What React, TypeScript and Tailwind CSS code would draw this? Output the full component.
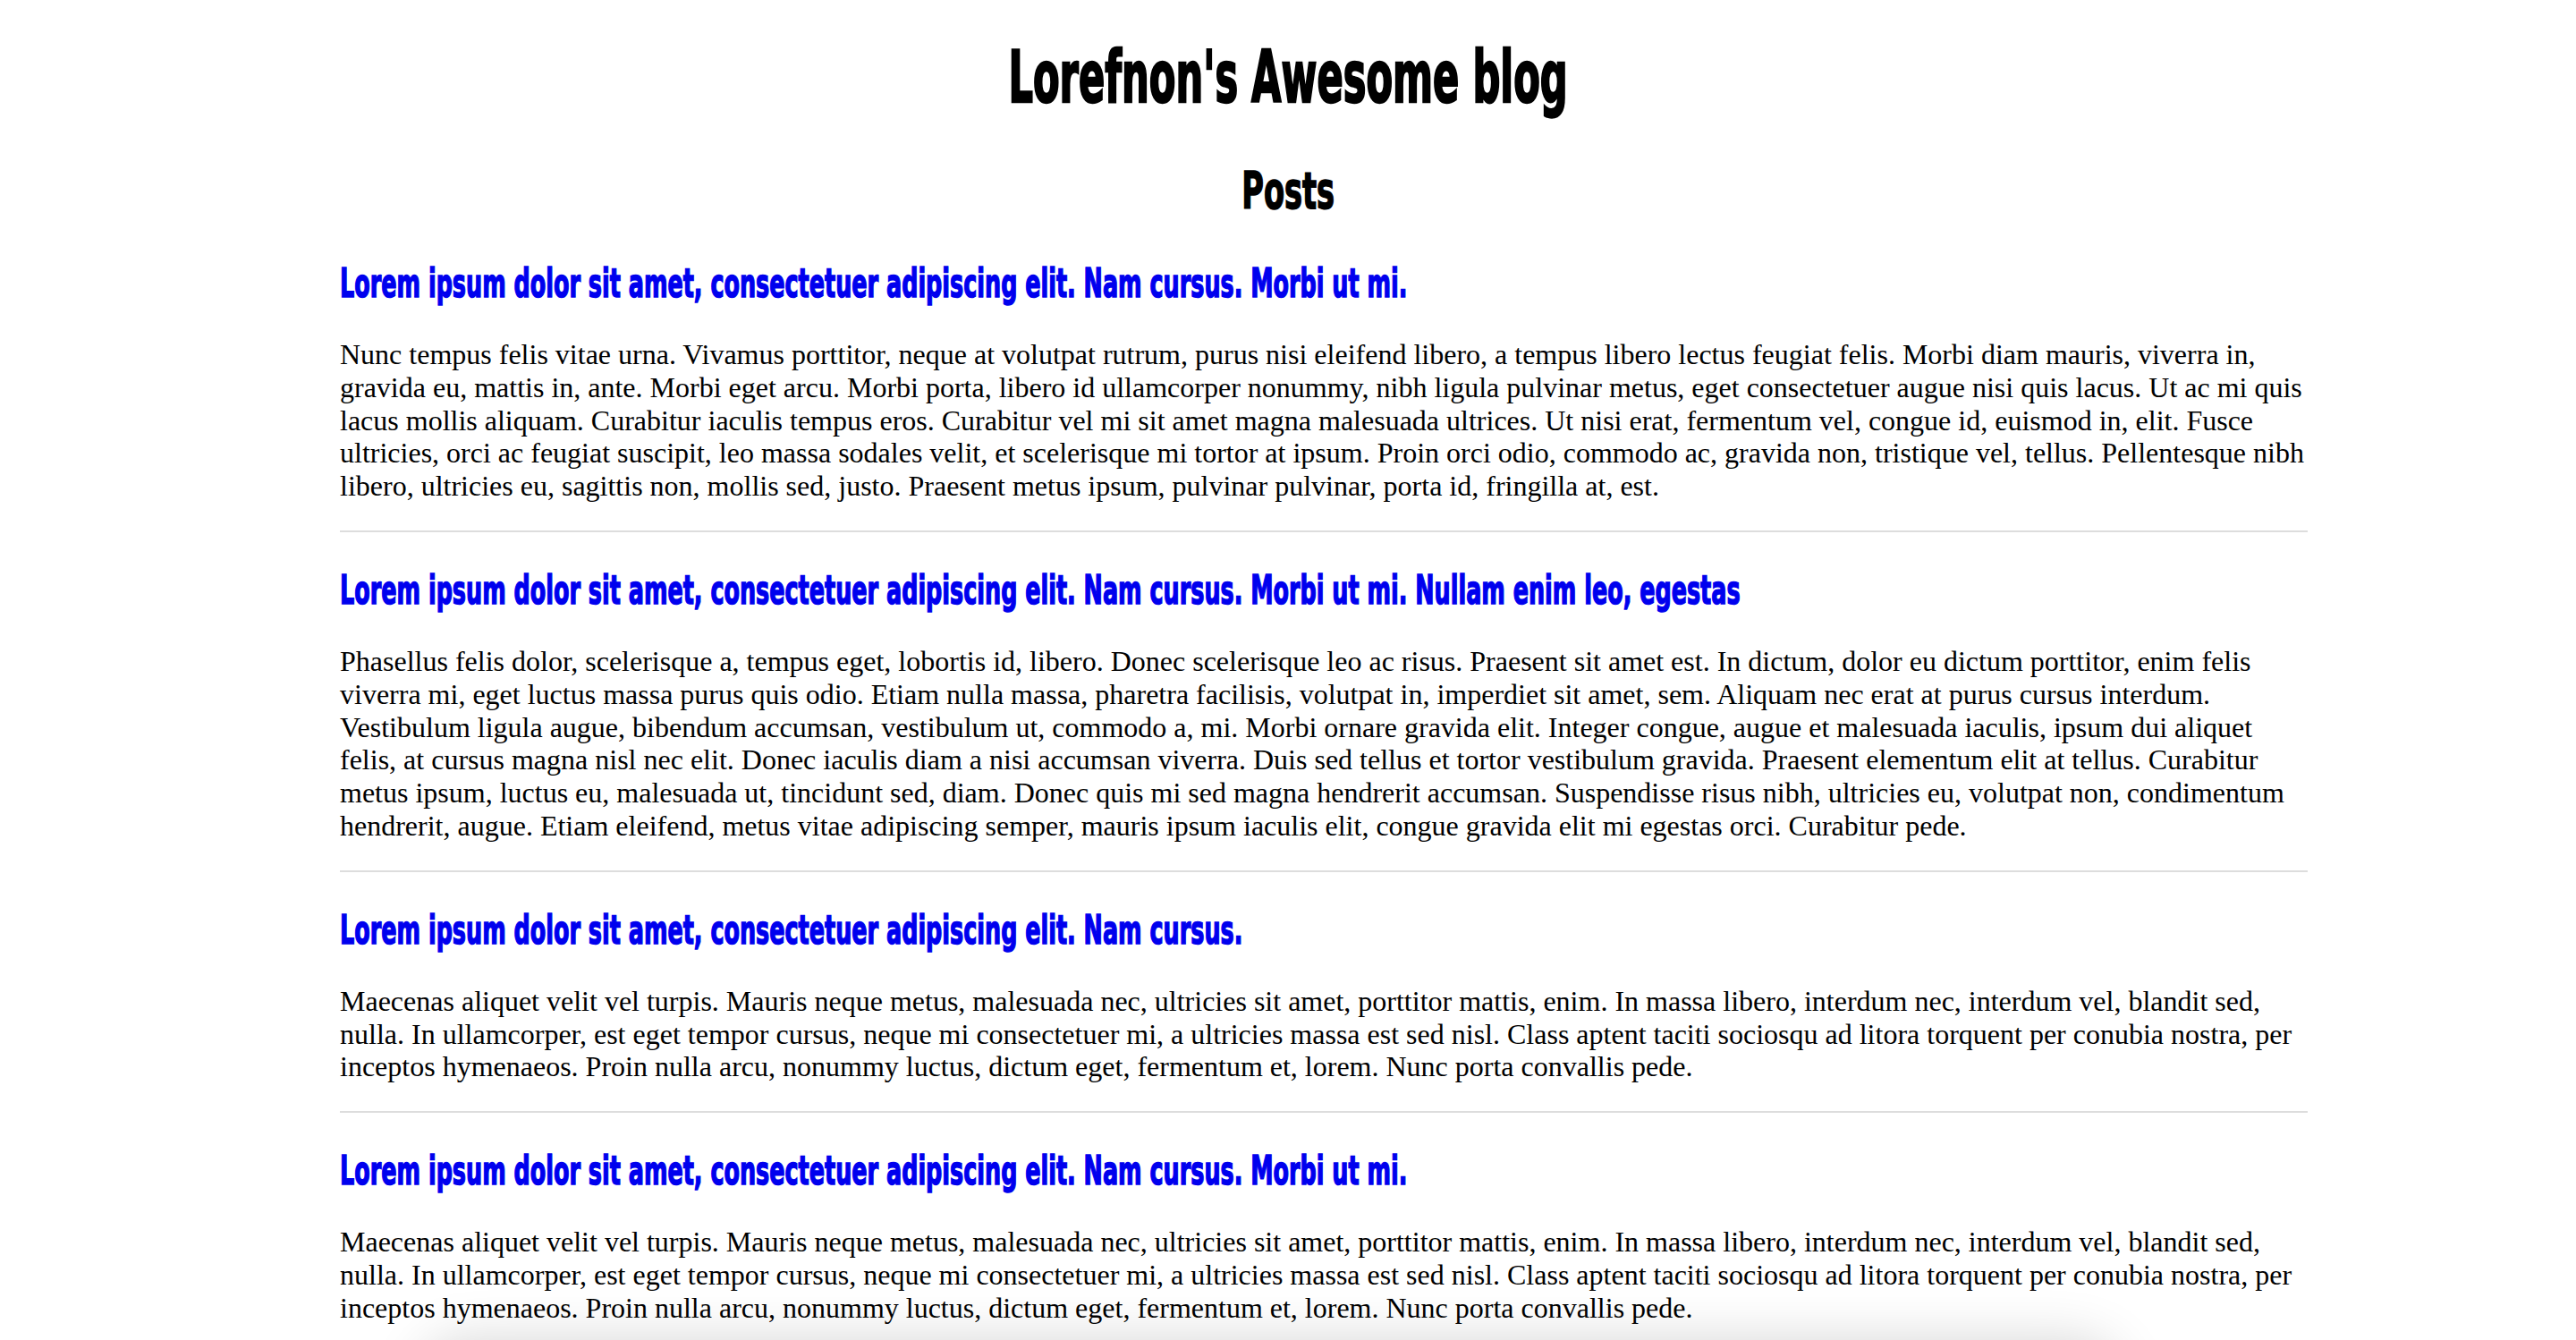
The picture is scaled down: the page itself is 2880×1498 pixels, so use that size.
const posts = [
  {
    title: "Lorem ipsum dolor sit amet, consectetuer adipiscing elit. Nam cursus. Morbi ut mi.",
    body: "Nunc tempus felis vitae urna. Vivamus porttitor, neque at volutpat rutrum, purus nisi eleifend libero, a tempus libero lectus feugiat felis. Morbi diam mauris, viverra in, gravida eu, mattis in, ante. Morbi eget arcu. Morbi porta, libero id ullamcorper nonummy, nibh ligula pulvinar metus, eget consectetuer augue nisi quis lacus. Ut ac mi quis lacus mollis aliquam. Curabitur iaculis tempus eros. Curabitur vel mi sit amet magna malesuada ultrices. Ut nisi erat, fermentum vel, congue id, euismod in, elit. Fusce ultricies, orci ac feugiat suscipit, leo massa sodales velit, et scelerisque mi tortor at ipsum. Proin orci odio, commodo ac, gravida non, tristique vel, tellus. Pellentesque nibh libero, ultricies eu, sagittis non, mollis sed, justo. Praesent metus ipsum, pulvinar pulvinar, porta id, fringilla at, est.",
  },
  {
    title: "Lorem ipsum dolor sit amet, consectetuer adipiscing elit. Nam cursus. Morbi ut mi. Nullam enim leo, egestas",
    body: "Phasellus felis dolor, scelerisque a, tempus eget, lobortis id, libero. Donec scelerisque leo ac risus. Praesent sit amet est. In dictum, dolor eu dictum porttitor, enim felis viverra mi, eget luctus massa purus quis odio. Etiam nulla massa, pharetra facilisis, volutpat in, imperdiet sit amet, sem. Aliquam nec erat at purus cursus interdum. Vestibulum ligula augue, bibendum accumsan, vestibulum ut, commodo a, mi. Morbi ornare gravida elit. Integer congue, augue et malesuada iaculis, ipsum dui aliquet felis, at cursus magna nisl nec elit. Donec iaculis diam a nisi accumsan viverra. Duis sed tellus et tortor vestibulum gravida. Praesent elementum elit at tellus. Curabitur metus ipsum, luctus eu, malesuada ut, tincidunt sed, diam. Donec quis mi sed magna hendrerit accumsan. Suspendisse risus nibh, ultricies eu, volutpat non, condimentum hendrerit, augue. Etiam eleifend, metus vitae adipiscing semper, mauris ipsum iaculis elit, congue gravida elit mi egestas orci. Curabitur pede.",
  },
  {
    title: "Lorem ipsum dolor sit amet, consectetuer adipiscing elit. Nam cursus.",
    body: "Maecenas aliquet velit vel turpis. Mauris neque metus, malesuada nec, ultricies sit amet, porttitor mattis, enim. In massa libero, interdum nec, interdum vel, blandit sed, nulla. In ullamcorper, est eget tempor cursus, neque mi consectetuer mi, a ultricies massa est sed nisl. Class aptent taciti sociosqu ad litora torquent per conubia nostra, per inceptos hymenaeos. Proin nulla arcu, nonummy luctus, dictum eget, fermentum et, lorem. Nunc porta convallis pede.",
  },
  {
    title: "Lorem ipsum dolor sit amet, consectetuer adipiscing elit. Nam cursus. Morbi ut mi.",
    body: "Maecenas aliquet velit vel turpis. Mauris neque metus, malesuada nec, ultricies sit amet, porttitor mattis, enim. In massa libero, interdum nec, interdum vel, blandit sed, nulla. In ullamcorper, est eget tempor cursus, neque mi consectetuer mi, a ultricies massa est sed nisl. Class aptent taciti sociosqu ad litora torquent per conubia nostra, per inceptos hymenaeos. Proin nulla arcu, nonummy luctus, dictum eget, fermentum et, lorem. Nunc porta convallis pede.",
  },
];

// no Oswald offline: condensed bold squeezed horizontally to get the narrow look
const display = "font-['DejaVu_Sans_Condensed','DejaVu_Sans',sans-serif] font-bold";

export default function App() {
  return (
    <div className="relative min-h-[1498px] overflow-hidden bg-white text-black">
      <div className="mx-auto w-[2280px] pt-[43px]">
        <h1 className={`${display} text-center text-[80px] leading-[88px]`}>
          <span className="inline-block origin-center scale-x-[0.6] whitespace-nowrap [-webkit-text-stroke:2.5px_currentColor]">
            Lorefnon's Awesome blog
          </span>
        </h1>
        <h2 className={`${display} mt-[50px] text-center text-[57px] leading-[64px]`}>
          <span className="inline-block origin-center scale-x-[0.656] [-webkit-text-stroke:1.5px_currentColor]">
            Posts
          </span>
        </h2>
        <ul className="mt-[48px] pl-[80px]">
          {posts.map((post, idx) => (
            <li key={idx}>
              <a
                href="#"
                className={`${display} block whitespace-nowrap text-[44px] leading-[48px] text-[#0000ee]`}
              >
                <span className="inline-block origin-left scale-x-[0.643] [-webkit-text-stroke:1.5px_currentColor]">
                  {post.title}
                </span>
              </a>
              <p className="mt-[37px] font-['Liberation_Serif','Times_New_Roman',serif] text-[32px] leading-[36.8px]">
                {post.body}
              </p>
              {idx < posts.length - 1 && (
                <hr className="mt-[31px] mb-[41px] border-t-2 border-[#dddddd]" />
              )}
            </li>
          ))}
        </ul>
      </div>
      <div className="fixed top-full left-[470px] h-[100px] w-[1900px] rounded-[60px] bg-white shadow-[0_0_60px_rgba(0,0,0,0.16)]" />
    </div>
  );
}
